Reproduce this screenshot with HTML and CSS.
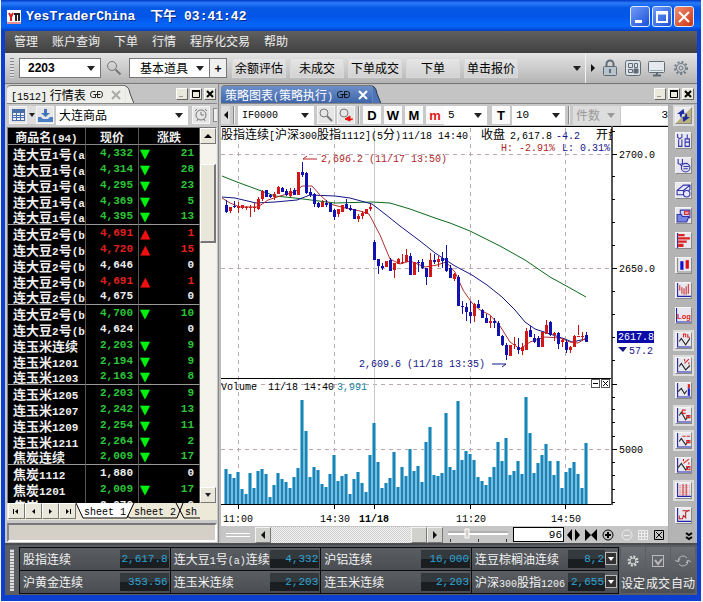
FILE: index.html
```html
<!DOCTYPE html>
<html lang="zh-CN">
<head>
<meta charset="utf-8">
<title>YesTraderChina</title>
<link rel="stylesheet" href="styles.css">
</head>
<body>
<div class="window">
  <header class="titlebar">
    <svg class="logo" width="14" height="14" viewBox="0 0 14 14"><rect width="14" height="14" fill="#fff"/><path d="M2 3l2 4v4M6 3L4 7" stroke="#c22" stroke-width="2" fill="none"/><path d="M7 4h6M9 4v7M12 4v7" stroke="#222" stroke-width="2" fill="none"/><path d="M0 13h14" stroke="#c22"/></svg>
    <h1>YesTraderChina</h1>
    <span class="clock"><b>下午</b> 03:41:42</span>
    <div class="winbtns">
      <button class="wb" aria-label="最小化"><svg width="18" height="18" viewBox="0 0 18 18"><path d="M4 12h7v3H4z" fill="#fff"/></svg></button>
      <button class="wb" aria-label="最大化"><svg width="18" height="18" viewBox="0 0 18 18"><path d="M4 4h10v10H4zM4 5.500h10" fill="none" stroke="#fff" stroke-width="2"/></svg></button>
      <button class="wb close" aria-label="关闭"><svg width="18" height="18" viewBox="0 0 18 18"><path d="M4 4l10 10M14 4L4 14" stroke="#fff" stroke-width="2"/></svg></button>
    </div>
  </header>

  <nav class="menubar">
    <a href="#">管理</a><a href="#">账户查询</a><a href="#">下单</a><a href="#">行情</a><a href="#">程序化交易</a><a href="#">帮助</a>
  </nav>

  <div class="toolbar">
    <span class="grip"></span>
    <label class="combo code"><select aria-label="代码"><option>2203</option></select></label>
    <button class="plain" aria-label="搜索"><svg width="17" height="17" viewBox="0 0 17 17" fill="none"><circle cx="6" cy="6" r="4.500" stroke="#777"/><path d="M9.500 9.500l5 5" stroke="#777" stroke-width="2"/></svg></button>
    <div class="joined">
      <label class="combo tools"><select aria-label="道具"><option>基本道具</option></select></label>
      <button class="plus" aria-label="添加">+</button>
    </div>
    <div class="actions">
      <button>余额评估</button><button>未成交</button><button>下单成交</button><button>下单</button><button>单击报价</button>
    </div>
    <span class="tri-down more"></span>
    <div class="sys">
      <span class="tri-right"></span>
      <button class="plain" aria-label="锁定"><svg width="16" height="18" viewBox="0 0 16 18" fill="none" stroke="#5f6b77"><path d="M4.500 8V5a3.500 3.500 0 0 1 7 0v3" stroke-width="2"/><rect x="1.500" y="7.500" width="13" height="9" rx="1" fill="#b9c3cb"/><path d="M8 10v4" stroke-width="2"/></svg></button>
      <button class="plain" aria-label="布局"><svg width="16" height="18" viewBox="0 0 16 18" fill="none" stroke="#5f6b77"><rect x=".5" y="1.500" width="15" height="15" rx="2" fill="#dce3e8"/><path d="M3.500 4.500h4v4h-4zM9.500 4.500h3v4h-3zM3.500 10.500h4v3h-4z"/><path d="M9 10h4v4H9z" fill="#5f6b77"/></svg></button>
      <button class="plain" aria-label="显示器"><svg width="18" height="18" viewBox="0 0 18 18" stroke="#5f6b77"><rect x=".5" y="2.500" width="16" height="11" rx="1" fill="#e4eaef"/><path d="M5 16.500h8M9 14v2" stroke-width="2"/><path d="M2 11.500h13" stroke="#9aa"/></svg></button>
      <button class="plain" aria-label="设置"><svg width="16" height="18" viewBox="0 0 16 18" fill="none" stroke="#6f7a85"><circle cx="8" cy="9" r="6" stroke-width="2" stroke-dasharray="2 2"/><circle cx="8" cy="9" r="4.500"/><circle cx="8" cy="9" r="2"/></svg></button>
    </div>
  </div>

  <main class="workspace">
    <section class="quotes">
      <div class="tabrow">
        <div class="tab light"><h2><span class="m">[1512]</span> 行情表</h2>
          <svg width="15" height="9" viewBox="0 0 15 9" fill="none" stroke="#222"><path d="M6.500 1.500H3.500q-2 0-2 3t2 3h3v-3h-2M8.500 7.500v-6h3q2 0 2 3t-2 3zM6.500 4.500h5"/></svg>
          <button class="x" aria-label="关闭标签"><svg width="10" height="10" viewBox="0 0 10 10"><path d="M1 1l8 8M9 1L1 9" stroke="#aaa" stroke-width="2"/></svg></button></div>
        <svg class="slope" width="9" height="19" viewBox="0 0 9 19"><path d="M0 1Q4 2 5 9L9 19H0z" fill="#eeeeea"/><path d="M0 1Q4 2 5 9L9 19" fill="none" stroke="#444"/></svg>
        <div class="minis"><button aria-label="最小化"><svg width="10" height="10" viewBox="0 0 10 10"><path d="M2 7.500h4" stroke="#999"/></svg></button><button aria-label="还原"><svg width="10" height="10" viewBox="0 0 10 10"><path d="M1.500 2v6.500h7V2M1 2h8" fill="none" stroke="#000"/><path d="M1 2h8" stroke="#000" stroke-width="2"/></svg></button><button aria-label="关闭"><svg width="10" height="10" viewBox="0 0 10 10"><path d="M2 2l6 6M8 2L2 8" stroke="#000" stroke-width="2"/></svg></button></div>
      </div>
      <div class="subbar">
        <button class="sq" aria-label="表格"><svg width="13" height="12" viewBox="0 0 13 12"><path d="M0 0h13v12H0z" fill="#4a6ea9"/><path d="M1 4h3v2H1zM5 4h3v2H5zM9 4h3v2H9zM1 7h3v1H1zM5 7h3v1H5zM9 7h3v1H9zM1 9h3v2H1zM5 9h3v2H5zM9 9h3v2H9z" fill="#eef"/></svg></button>
        <button class="thin" aria-label="更多"><span class="tri-down sm"></span></button>
        <button class="sq" aria-label="导入"><svg width="15" height="13" viewBox="0 0 15 13"><path d="M6 0h3v4h3L7.500 8L3 4h3z" fill="#3f74bd"/><path d="M0 8h3l2 2h5l2-2h3v5H0z" fill="#4b7fc4"/></svg></button>
        <label class="combo market"><select aria-label="市场"><option>大连商品</option></select></label>
        <button class="sq" aria-label="闹钟"><svg width="14" height="14" viewBox="0 0 14 14" fill="none" stroke="#777"><circle cx="7" cy="7" r="5"/><path d="M7 4v3h3M1 3l2-2M13 3l-2-2M3 13l1-2M11 13l-1-2"/></svg></button>
        <button class="cut" aria-label="列"></button>
      </div>
      <div class="gridwrap">
        <div class="gridview">
        <table>
          <thead><tr><th>商品名<i>(94)</i></th><th>现价</th><th colspan="2">涨跌</th></tr></thead>
          <tbody>
            <tr class="dn"><td>连大豆<i>1</i>号<i>(a</i></td><td>4,332</td><td>▼</td><td>21</td></tr>
            <tr class="dn"><td>连大豆<i>1</i>号<i>(a</i></td><td>4,314</td><td>▼</td><td>28</td></tr>
            <tr class="dn"><td>连大豆<i>1</i>号<i>(a</i></td><td>4,295</td><td>▼</td><td>23</td></tr>
            <tr class="dn"><td>连大豆<i>1</i>号<i>(a</i></td><td>4,369</td><td>▼</td><td>5</td></tr>
            <tr class="dn"><td>连大豆<i>1</i>号<i>(a</i></td><td>4,395</td><td>▼</td><td>13</td></tr>
            <tr class="up"><td>连大豆<i>2</i>号<i>(b</i></td><td>4,691</td><td>▲</td><td>1</td></tr>
            <tr class="up"><td>连大豆<i>2</i>号<i>(b</i></td><td>4,720</td><td>▲</td><td>15</td></tr>
            <tr><td>连大豆<i>2</i>号<i>(b</i></td><td>4,646</td><td></td><td>0</td></tr>
            <tr class="up"><td>连大豆<i>2</i>号<i>(b</i></td><td>4,691</td><td>▲</td><td>1</td></tr>
            <tr><td>连大豆<i>2</i>号<i>(b</i></td><td>4,675</td><td></td><td>0</td></tr>
            <tr class="dn"><td>连大豆<i>2</i>号<i>(b</i></td><td>4,700</td><td>▼</td><td>10</td></tr>
            <tr><td>连大豆<i>2</i>号<i>(b</i></td><td>4,624</td><td></td><td>0</td></tr>
            <tr class="dn"><td>连玉米连续</td><td>2,203</td><td>▼</td><td>9</td></tr>
            <tr class="dn"><td>连玉米<i>1201</i></td><td>2,194</td><td>▼</td><td>9</td></tr>
            <tr class="dn"><td>连玉米<i>1203</i></td><td>2,163</td><td>▼</td><td>8</td></tr>
            <tr class="dn"><td>连玉米<i>1205</i></td><td>2,203</td><td>▼</td><td>9</td></tr>
            <tr class="dn"><td>连玉米<i>1207</i></td><td>2,242</td><td>▼</td><td>13</td></tr>
            <tr class="dn"><td>连玉米<i>1209</i></td><td>2,254</td><td>▼</td><td>11</td></tr>
            <tr class="dn"><td>连玉米<i>1211</i></td><td>2,264</td><td>▼</td><td>2</td></tr>
            <tr class="dn"><td>焦炭连续</td><td>2,009</td><td>▼</td><td>17</td></tr>
            <tr><td>焦炭<i>1112</i></td><td>1,880</td><td></td><td>0</td></tr>
            <tr class="dn"><td>焦炭<i>1201</i></td><td>2,009</td><td>▼</td><td>17</td></tr>
            <tr><td>焦炭<i>1202</i></td><td>2,070</td><td></td><td>0</td></tr>
          </tbody>
        </table>
        </div>
        <div class="vscroll"><button aria-label="向上"><span class="tri-up"></span></button><span class="space"></span><span class="thumb"></span><span class="rest"></span><button aria-label="向下"><span class="tri-down sm"></span></button></div>
      </div>
      <div class="sheets">
        <button aria-label="首页"><svg width="7" height="7" viewBox="0 0 7 7"><path d="M0 1h1v5H0zM5 1v5L2 3.500z"/></svg></button><button aria-label="上页"><svg width="7" height="7" viewBox="0 0 7 7"><path d="M5 1v5L2 3.500z"/></svg></button><button aria-label="下页"><svg width="7" height="7" viewBox="0 0 7 7"><path d="M2 1v5l3-2.500z"/></svg></button><button aria-label="末页"><svg width="7" height="7" viewBox="0 0 7 7"><path d="M6 1h1v5H6zM2 1v5l3-2.500z"/></svg></button>
        <svg class="sheettabs" width="124" height="17" viewBox="0 0 124 17"><path d="M0 0L7 15H50L57 0z" fill="#fff"/><path d="M0 0L7 15H51L58 0M51 13L54 15H101L107 0M100 0L108 15H124" fill="none" stroke="#000"/><text x="8" y="12">sheet 1</text><text x="58" y="12">sheet 2</text><text x="109" y="12">sh</text></svg>
      </div>
      <div class="footbox"></div>
    </section>

    <section class="chart">
      <div class="tabrow">
        <div class="tab blue"><h2>策略图表<span class="m">(</span>策略执行<span class="m">)</span></h2>
          <svg width="15" height="9" viewBox="0 0 15 9" fill="none" stroke="#111"><path d="M6.500 1.500H3.500q-2 0-2 3t2 3h3v-3h-2M8.500 7.500v-6h3q2 0 2 3t-2 3zM6.500 4.500h5"/></svg>
          <button class="x" aria-label="关闭标签"><svg width="10" height="10" viewBox="0 0 10 10"><path d="M1 1l8 8M9 1L1 9" stroke="#fff" stroke-width="2"/></svg></button></div>
        <svg class="slope" width="9" height="19" viewBox="0 0 9 19"><path d="M0 1Q4 2 5 9L9 19H0z" fill="#4b73b5"/><path d="M0 1Q4 2 5 9L9 19" fill="none" stroke="#234"/></svg>
        <div class="minis"><button aria-label="最小化"><svg width="10" height="10" viewBox="0 0 10 10"><path d="M2 7.500h4" stroke="#999"/></svg></button><button aria-label="还原"><svg width="10" height="10" viewBox="0 0 10 10"><path d="M1.500 2v6.500h7V2" fill="none" stroke="#000"/><path d="M1 2h8" stroke="#000" stroke-width="2"/></svg></button><button aria-label="关闭"><svg width="10" height="10" viewBox="0 0 10 10"><path d="M2 2l6 6M8 2L2 8" stroke="#000" stroke-width="2"/></svg></button></div>
      </div>
      <div class="chartbody">
        <div class="chartmain">
          <div class="subbar">
            <button class="thin" aria-label="左移"><span class="tri-left"></span></button>
            <span class="sep"></span>
            <label class="combo sym"><select aria-label="合约"><option>IF0000</option></select></label>
            <button class="sq" aria-label="搜索"><svg width="14" height="14" viewBox="0 0 14 14" fill="none" stroke="#777"><circle cx="5" cy="5" r="4"/><path d="M8 8l5 5" stroke-width="2"/></svg></button>
            <button class="sq" aria-label="搜索并跳转"><svg width="15" height="14" viewBox="0 0 15 14" fill="none" stroke="#777"><circle cx="5" cy="5" r="4"/><path d="M14 11h-3V8l-5 3 5 2" fill="#e11" stroke="#e11"/></svg></button>
            <span class="sep"></span>
            <div class="periods"><button>D</button><button>W</button><button>M</button><button class="on">m</button></div>
            <label class="combo num"><select aria-label="分钟"><option>5</option></select></label>
            <button class="tick">T</button>
            <label class="combo num wide"><select aria-label="笔数"><option>10</option></select></label>
            <span class="sep"></span>
            <label class="combo off"><select aria-label="件数" disabled><option>件数</option></select></label>
            <input class="count" aria-label="数量" value="3">
          </div>
          <svg class="plot" viewBox="221 126 447 400" preserveAspectRatio="xMinYMin meet">
            <rect x="221" y="126" width="447" height="400" fill="#fff"/>
            <g shape-rendering="crispEdges" fill="none">
              <path d="M238.500 144V504M334.500 144V504M470.500 128V504M565.500 128V504M221 154.500H612M221 268.500H612M221 384.500H590M221 449.500H612" stroke="#b9a9b4" stroke-dasharray="4 4"/>
              <path d="M374.500 128V504" stroke="#c8c8c8"/>
              <path d="M226 504V469m4 35V474m4 30V478m4 26V472m4 32V489m4 15V494m4 10V473m4 31V488m4 16V471m4 33V469m4 35V474m4 30V497m4 7V485m4 19V473m4 31V479m4 25V482m4 22V488m4 16V477m4 27V468m4 36V400m4 104V431m4 73V477m4 27V467m4 37V470m4 34V484m4 20V487m4 17V474m4 30V455m4 49V481m4 23V476m4 28V474m4 30V494m4 10V479m4 25V472m4 32V483m4 21V492m4 12V455m4 49V423m4 81V462m4 42V488m4 16V483m4 21V478m4 26V452m4 52V487m4 17V467m4 37V476m4 28V449m4 55V471m4 33V466m4 38V482m4 22V442m4 62V427m4 77V475m4 29V476m4 28V473m4 31V413m4 91V467m4 37V470m4 34V401m4 103V460m4 44V451m4 53V454m4 50V460m4 44V477m4 27V481m4 23V485m4 19V477m4 27V467m4 37V442m4 62V461m4 43V438m4 66V475m4 29V471m4 33V461m4 43V474m4 30V397m4 107V433m4 71V473m4 31V463m4 41V455m4 49V444m4 60V461m4 43V475m4 29V461m4 43V488m4 16V472m4 32V468m4 36V462m4 42V474m4 30V488m4 16V443" stroke="#6fc0e2" stroke-width="4"/>
              <path d="M226 504V469m4 35V474m4 30V478m4 26V472m4 32V489m4 15V494m4 10V473m4 31V488m4 16V471m4 33V469m4 35V474m4 30V497m4 7V485m4 19V473m4 31V479m4 25V482m4 22V488m4 16V477m4 27V468m4 36V400m4 104V431m4 73V477m4 27V467m4 37V470m4 34V484m4 20V487m4 17V474m4 30V455m4 49V481m4 23V476m4 28V474m4 30V494m4 10V479m4 25V472m4 32V483m4 21V492m4 12V455m4 49V423m4 81V462m4 42V488m4 16V483m4 21V478m4 26V452m4 52V487m4 17V467m4 37V476m4 28V449m4 55V471m4 33V466m4 38V482m4 22V442m4 62V427m4 77V475m4 29V476m4 28V473m4 31V413m4 91V467m4 37V470m4 34V401m4 103V460m4 44V451m4 53V454m4 50V460m4 44V477m4 27V481m4 23V485m4 19V477m4 27V467m4 37V442m4 62V461m4 43V438m4 66V475m4 29V471m4 33V461m4 43V474m4 30V397m4 107V433m4 71V473m4 31V463m4 41V455m4 49V444m4 60V461m4 43V475m4 29V461m4 43V488m4 16V472m4 32V468m4 36V462m4 42V474m4 30V488m4 16V443" stroke="#2480b0" stroke-width="2.800"/>
              <path d="M221 126.500H668M221 378.500H612M221 504.500H612M238.500 505v4M334.500 505v4M374.500 505v4M470.500 505v4M565.500 505v4" stroke="#000"/>
              <path d="M612 126V505" stroke="#555" stroke-width="2"/>
              <path d="M612 131.500h3M612 154.500h5M612 176.500h3M612 199.500h3M612 222.500h3M612 245.500h3M612 268.500h5M612 291.500h3M612 314.500h3M612 337.500h3M612 360.500h3M612 384.500h5M612 397.500h3M612 409.500h3M612 422.500h3M612 436.500h3M612 449.500h5M612 462.500h3M612 475.500h3M612 489.500h3M612 502.500h3" stroke="#000"/>
            </g>
            <g fill="none">
              <path d="M222 176L237 182L256 189L275 196L295 198L335 203L372 202L390 203L410 209L435 218L450 223L470 231L500 246L525 260L550 277L570 288L586 297" stroke="#0a6a1a"/>
              <path d="M222 197L235 198L256 203L275 202L297 200L310 195L335 196L350 198L372 204L385 214L400 226L420 241L435 253L455 266L472 275L487 285L502 297L515 310L525 322L535 329L550 334L565 339L572 342L586 339" stroke="#15158a"/>
              <path d="M222 198L230 203L240 207L258 207L268 200L280 196L295 192L302 186L312 186L320 195L330 204L345 208L360 211L369 214L380 235L390 259L400 264L410 261L425 267L437 265L446 262L455 272L463 290L472 303L480 310L490 315L500 326L510 342L520 349L530 342L545 337L560 338L570 342L578 343L586 338" stroke="#b03030"/>
            </g>
            <g fill="none" shape-rendering="crispEdges">
              <path d="M230.500 207v6M238.500 202v11M242.500 205v4M246.500 206v4M250.500 205v12M254.500 203v9M258.500 197v13M262.500 190v11M274.500 192v8M278.500 186v8M290.500 188v9M298.500 172v23M322.500 200v7M338.500 209v8M342.500 205v7M358.500 214v8M362.500 211v8M366.500 209v5M370.500 204v7M386.500 261v6M394.500 263v15M398.500 258v6M402.500 254v10M406.500 249v13M414.500 262v13M430.500 253v24M438.500 256v11M454.500 273v8M474.500 303v19M490.500 316v12M510.500 345v11M514.500 337v12M522.500 343v12M526.500 328v22M542.500 332v15M546.500 320v14M554.500 332v9M562.500 339v8M570.500 346v7M574.500 335v12M578.500 325v10M582.500 332v9" stroke="#c11"/>
              <path d="M230.500 207v4M238.500 206v2M242.500 205v3M246.500 207v1M250.500 207v1M254.500 207v1M258.500 199v10M262.500 191v8M274.500 194v3M278.500 187v7M290.500 191v5M298.500 172v23M322.500 202v5M338.500 209v5M342.500 205v7M358.500 216v3M362.500 213v3M366.500 209v5M370.500 207v2M386.500 261v6M394.500 263v7M398.500 259v5M402.500 262v1M406.500 255v7M414.500 262v13M430.500 260v17M438.500 259v3M454.500 274v5M474.500 304v12M490.500 321v2M510.500 345v11M514.500 344v1M522.500 347v4M526.500 331v19M542.500 332v15M546.500 325v9M554.500 333v2M562.500 340v2M570.500 347v3M574.500 336v11M578.500 336v1M582.500 336v1" stroke="#d01818" stroke-width="3"/>
              <path d="M226.500 200v13M234.500 201v7M266.500 190v7M270.500 194v4M282.500 187v5M286.500 189v7M294.500 188v7M302.500 162v15M306.500 172v22M310.500 188v9M314.500 193v14M318.500 202v6M326.500 200v7M330.500 203v9M334.500 209v11M346.500 199v10M350.500 205v6M354.500 209v10M374.500 240v20M378.500 259v15M382.500 263v7M390.500 258v13M410.500 253v22M418.500 260v12M422.500 259v10M426.500 268v17M434.500 254v10M442.500 252v16M446.500 245v27M450.500 265v13M458.500 275v31M462.500 301v13M466.500 303v18M470.500 301v22M478.500 300v8M482.500 309v9M486.500 314v9M494.500 318v10M498.500 321v15M502.500 335v11M506.500 343v17M518.500 338v16M530.500 326v11M534.500 334v9M538.500 336v11M550.500 321v15M558.500 332v17M566.500 340v13M586.500 332v10" stroke="#1515a5"/>
              <path d="M226.500 205v7M234.500 206v1M266.500 190v7M270.500 195v2M282.500 188v4M286.500 191v4M294.500 190v5M302.500 172v3M306.500 173v20M310.500 192v3M314.500 194v10M318.500 203v4M326.500 203v2M330.500 203v9M334.500 210v7M346.500 204v4M350.500 208v2M354.500 209v10M374.500 242v18M378.500 259v7M382.500 266v2M390.500 260v11M410.500 256v19M418.500 262v1M422.500 262v6M426.500 268v9M434.500 260v2M442.500 258v3M446.500 258v13M450.500 268v10M458.500 277v29M462.500 306v1M466.500 307v5M470.500 312v4M478.500 304v4M482.500 310v8M486.500 318v5M494.500 321v2M498.500 323v13M502.500 336v9M506.500 345v10M518.500 347v3M530.500 330v7M534.500 338v4M538.500 338v9M550.500 322v13M558.500 333v11M566.500 342v8M586.500 335v7" stroke="#1212b0" stroke-width="3"/>
            </g>
            <path d="M317 159H303l4-3" fill="none" stroke="#c02020"/>
            <path d="M492 364h14l-4 3" fill="none" stroke="#15158a"/>
            <g class="ct">
              <text x="221" y="139"><tspan class="cj">股指连续</tspan>[<tspan class="cj">沪深</tspan>300<tspan class="cj">股指</tspan>1112](5<tspan class="cj">分</tspan>)</text>
              <text x="402" y="139">11/18 14:40</text>
              <text x="481" y="139"><tspan class="cj">收盘</tspan></text><text x="510" y="139">2,617.8</text><text x="556" y="139" class="navy">-4.2</text>
              <svg x="596" y="126" width="16" height="18"><text class="cj" x="0" y="13">开盘</text></svg>
              <text x="501" y="151" class="red">H: -2.91%</text><text x="562" y="151" class="navy">L: 0.31%</text>
              <text x="321" y="162" class="red">2,696.2 (11/17 13:50)</text>
              <text x="359" y="367" class="navy">2,609.6 (11/18 13:35)</text>
              <text x="221" y="390">Volume</text><text x="268" y="390">11/18 14:40</text><text x="337" y="390" class="teal">3,991</text>
              <text x="619" y="158">2700.0</text><text x="619" y="272">2650.0</text><text x="619" y="453">5000</text>
              <rect x="617" y="331" width="37" height="12" fill="#0a0aa8"/><text x="618" y="340" class="white">2617.8</text>
              <path d="M618 347h9l-4 5z" fill="#15158a"/><text x="629" y="354" class="navy">57.2</text>
              <text x="223" y="522">11:00</text><text x="320" y="522">14:30</text><text x="359" y="522" font-weight="bold">11/18</text><text x="456" y="522">11:20</text><text x="551" y="522">14:50</text>
            </g>
            <g fill="#fff" stroke="#555"><rect x="591.500" y="379.500" width="8" height="8"/><rect x="601.500" y="379.500" width="8" height="8"/><path d="M593 383.500h5M603 381l5 5M608 381l-5 5" stroke="#000"/></g>
          </svg>
          <div class="hbar">
            <span class="rail"></span>
            <button class="hb" aria-label="左滚"><span class="tri-left"></span></button>
            <span class="track"></span>
            <button class="hb" aria-label="滑块"></button>
            <button class="hb" aria-label="右滚"><span class="tri-right"></span></button>
            <svg class="slider" width="62" height="16" viewBox="0 0 62 16"><path d="M1 7h60" stroke="#fff" stroke-width="2"/><path d="M1 5h60" stroke="#999"/><path d="M3.500 12v3M31.500 12v3M59.500 12v3" stroke="#333"/><path d="M18 2h4v9h-4z" fill="#d4d0c8" stroke="#fff"/></svg>
            <input class="bars" aria-label="柱数" value="96">
            <svg class="zooms" width="98" height="14" viewBox="0 0 98 14"><path d="M5 1v12L0 7zM8 1v12l5-6zM18 1v12l6-6zM30 1v12l-6-6z"/><g fill="none" stroke="#000"><circle cx="41" cy="7" r="5"/><path d="M41 4v6M38 7h6" stroke-width="2"/><path d="M87.500 2.500h9v9h-9zM89 4l6 6M95 4l-6 6"/></g><g fill="none" stroke="#ededed"><circle cx="60" cy="7" r="5"/><path d="M57 7.500h6"/><path d="M71.500 2.500h9v9h-9zM71 5.500h10M71 8.500h10M74.500 2v10M77.500 2v10"/></g></svg>
          </div>
        </div>
        <aside class="side">
          <button class="lit" aria-label="刷新"><svg viewBox="0 0 14 14"><path d="M14 0v14H0z" fill="#b9b27c"/><path d="M7 1L1 5.500h2.500Q3 8 5 9.500Q5 7 6 5.500H8zM7 13l6-4.500h-2.500Q11 6 9 4.500Q9 7 8 8.500H6z" fill="#1a2aa0"/></svg></button>
          <button aria-label="工具"><svg viewBox="0 0 14 14" fill="none" stroke="#33a"><path d="M1.500 1v3l2 1.500 2-1.500V1M2.500 6v6.500h3V6M8.500 5.500h4v7h-4zM9 8.500h4M10.500 1.500v4"/></svg></button>
          <button aria-label="工具设置"><svg viewBox="0 0 14 14" fill="none" stroke="#33a"><path d="M2 1v4l2 1 2-1V1M4 6l4 5"/><circle cx="9" cy="9" r="4" fill="#dde"/><path d="M7 8h5M7 10h4"/></svg></button>
          <button aria-label="橡皮"><svg viewBox="0 0 14 14" fill="#e8e8ff" stroke="#33a"><path d="M1 7l6-5h6v4l-5 5H1zM1 7h6v4M7 7l6-5"/><circle cx="10" cy="10" r="3"/></svg></button>
          <button aria-label="打开"><svg viewBox="0 0 14 14" fill="#cdd3ff" stroke="#33a"><path d="M4 2h9v7H4z"/><path d="M8 3h4v3H8z" fill="#f99" stroke="#c33"/><path d="M1 6h4l1 2h6l-2 5H1z" fill="#7784e0"/></svg></button>
          <button aria-label="横条"><svg viewBox="0 0 14 14"><path d="M1.500 0v14" stroke="#22a"/><path d="M2 1h6v2H2zM2 4h11v2H2zM2 7h8v2H2zM2 10h5v3H2z" fill="#d22"/></svg></button>
          <button aria-label="K线"><svg viewBox="0 0 14 14"><path d="M1.500 0v13H14" stroke="#888" fill="none"/><path d="M4 3h3v8H4z" fill="#11c"/><path d="M9 2h3v8H9z" fill="#d11"/></svg></button>
          <button aria-label="线图"><svg viewBox="0 0 14 14" fill="none"><path d="M1.500 0v12.500H14" stroke="#22a"/><path d="M3.500 2v5M5.500 4v6M7.500 5v6M9.500 3v8M11.500 1v9" stroke="#c33"/></svg></button>
          <button aria-label="对数"><svg viewBox="0 0 14 14"><path d="M.5 0v13H14" stroke="#22a" fill="none"/><text x="1" y="10" class="log">Log</text></svg></button>
          <button class="lit" aria-label="RL"><svg viewBox="0 0 14 14" fill="none"><path d="M1.500 0v13H14" stroke="#22a"/><path d="M3 8l2-3 4 6 4-6" stroke="#222"/><path d="M7 4V1h2v3M11 1v3h2" stroke="#d22"/></svg></button>
          <button class="lit" aria-label="百分比"><svg viewBox="0 0 14 14" fill="none"><path d="M1.500 0v13H14" stroke="#22a"/><path d="M3 8l2-3 4 6 4-4" stroke="#222"/><path d="M8 5l4-4M8 1v2M12 4v2" stroke="#d22"/></svg></button>
          <button aria-label="标记"><svg viewBox="0 0 14 14" fill="none"><path d="M1.500 0v13H14" stroke="#22a"/><path d="M2 8l3-3 3 5 2-3" stroke="#222"/><path d="M12 1v4" stroke="#d22" stroke-width="2"/><path d="M12 5v7" stroke="#22c" stroke-width="2"/></svg></button>
          <button class="lit" aria-label="C线"><svg viewBox="0 0 14 14" fill="none"><path d="M1.500 0v13H14" stroke="#22a"/><path d="M3 7l2-3 4 7 3-4" stroke="#222"/><path d="M9 2H6v3h3M10 7h3v2h-3z" stroke="#d22"/></svg></button>
          <button class="lit" aria-label="差值"><svg viewBox="0 0 14 14" fill="none"><path d="M1.500 0v13H14" stroke="#22a"/><path d="M3 8l2-3 4 6 3-4" stroke="#222"/><path d="M6 3h3M10 3h3M10 7h3v2h-3z" stroke="#d22"/></svg></button>
          <button aria-label="比率"><svg viewBox="0 0 14 14" fill="none"><path d="M1.500 0v13H14" stroke="#22a"/><path d="M2 9l3-4 4 6 3-3" stroke="#222"/><path d="M7 5l5-4M7 1v2M12 4v2M10 8h3v3h-3z" stroke="#d22"/></svg></button>
          <button class="lit" aria-label="网格"><svg viewBox="0 0 14 14" fill="none"><path d="M1.500 0v12.500H14" stroke="#22a"/><path d="M3 2.500h10M3 4.500h10M3 6.500h10M3 8.500h10M3 10.500h10" stroke="#e88" stroke-dasharray="2 1"/><path d="M6.500 1v11M9.500 1v11" stroke="#c44"/></svg></button>
          <button aria-label="趋势"><svg viewBox="0 0 14 14" fill="none"><path d="M1.500 0v12.500H14" stroke="#22a"/><path d="M3 7v3h3l1-3 2 2V4l3-2M6 2.500h7" stroke="#b22"/></svg></button>
          <svg class="chev" width="8" height="9" viewBox="0 0 8 9"><path d="M1 1l3 2 3-2M1 5l3 2 3-2" fill="none" stroke="#000" stroke-width="2"/></svg>
        </aside>
      </div>
    </section>
  </main>

  <footer class="status">
    <span class="grip"></span>
    <dl class="ticker">
      <div><dt>股指连续</dt><dd>2,617.8</dd></div>
      <div><dt>连大豆<i>1</i>号<i>(a)</i>连续</dt><dd>4,332</dd></div>
      <div><dt>沪铝连续</dt><dd>16,000</dd></div>
      <div class="pick"><dt>连豆棕榈油连续</dt><dd>8,2</dd><button aria-label="选择"><span class="tri-down sm"></span></button></div>
      <div><dt>沪黄金连续</dt><dd>353.56</dd></div>
      <div><dt>连玉米连续</dt><dd>2,203</dd></div>
      <div><dt>连玉米连续</dt><dd>2,203</dd></div>
      <div class="pick"><dt>沪深<i>300</i>股指<i>1206</i></dt><dd>2,655</dd><button aria-label="选择"><span class="tri-down sm"></span></button></div>
    </dl>
    <button class="big"><svg width="14" height="14" viewBox="0 0 14 14" fill="none" stroke="#ddd"><circle cx="7" cy="7" r="4.500" stroke-width="2" stroke-dasharray="2 1.500"/><circle cx="7" cy="7" r="3"/></svg>设定</button>
    <button class="big"><svg width="14" height="14" viewBox="0 0 14 14" fill="none" stroke="#bbb"><rect x="1.500" y="1.500" width="11" height="11"/><path d="M4 6l3 4 4-5" stroke-width="2"/></svg>成交</button>
    <button class="big"><svg width="16" height="14" viewBox="0 0 16 14" fill="none" stroke="#bbb"><path d="M3 7a5 5 0 0 1 9-3M13 7a5 5 0 0 1-9 3M0 6l3 2 2-3M16 8l-3-2-2 3"/></svg>自动</button>
  </footer>
</div>
</body>
</html>
```
FILE: styles.css
```css
* { box-sizing: border-box; }
body {
  margin: 0;
  padding: 0 2px 1px 1px;
  background: #f4f4f4;
  color: #000;
  font: 12px/16px "Noto Sans CJK SC", sans-serif;
}
button, input, select {
  margin: 0;
  padding: 0;
  border: 0;
  border-radius: 0;
  color: inherit;
  font: inherit;
}
button { display: flex; align-items: center; justify-content: center; background: none; }
h1, h2, dl, dd { margin: 0; font: inherit; }
i { font-style: normal; line-height: 0; }
svg { display: block; flex: none; }
.m, .ticker i { font-family: "Liberation Mono", monospace; font-size: 10px; line-height: 0; }

.tri-down, .tri-up, .tri-left, .tri-right, .combo::after { width: 0; height: 0; border: 4px solid transparent; }
.tri-down, .combo::after { content: ""; border-top: 5px solid #222; border-bottom: 0; }
.tri-down.sm { border-width: 4px 3px 0; }
.tri-up { border-bottom: 4px solid #000; border-top: 0; }
.tri-left { border-right: 4px solid #111; border-left: 0; }
.tri-right { border-left: 4px solid #111; border-right: 0; }

.window {
  display: flex;
  flex-direction: column;
  height: calc(100vh - 1px);
  border: solid #0c3fd0;
  border-width: 0 4px 6px;
  background: #c6c6c6;
}

/* title bar */
.titlebar {
  display: flex;
  align-items: center;
  flex: none;
  height: 31px;
  margin: 0 -4px;
  padding: 2px 7px 0 6px;
  color: #fff;
  background: linear-gradient(#0038c8 0, #2b7cf8 3px, #0458e4 8px, #0355e6 16px, #0566fb 26px, #0040c8 31px);
  font: bold 13px "Liberation Mono", monospace;
}
.titlebar h1 { margin-left: 5px; text-shadow: 1px 1px #0a2a80; }
.clock { margin-left: 15px; font-size: 13px; white-space: pre; text-shadow: 1px 1px #0a2a80; }
.clock b { font: bold 13px "Noto Sans CJK SC", sans-serif; line-height: 0; }
.winbtns { display: flex; gap: 2px; margin-left: auto; }
.wb { width: 20px; height: 21px; border: 1px solid #dfe9ff; border-radius: 3px; background: linear-gradient(135deg, #6f9cf8, #1c50d8); }
.wb.close { background: linear-gradient(135deg, #f09070, #cc3310); }

.menubar {
  display: flex;
  align-items: center;
  flex: none;
  gap: 14px;
  height: 22px;
  padding: 0 0 2px 9px;
  background: linear-gradient(#606060, #404040);
}
.menubar a { color: #f0f0f0; text-decoration: none; }

/* main toolbar */
.toolbar {
  display: flex;
  align-items: center;
  flex: none;
  height: 31px;
  padding-left: 5px;
  border-bottom: 1px solid #777;
  background: linear-gradient(#e4e4e4, #b4b4b4);
}
.grip { width: 4px; height: 20px; background: repeating-linear-gradient(#888 0 1px, #ddd 1px 3px); }
.combo { display: grid; align-items: center; height: 20px; background: #fff; }
.combo > select, .combo::after { grid-area: 1 / 1; }
.combo > select { width: 100%; height: 100%; appearance: none; background: none; opacity: 1; }
.combo::after { justify-self: end; margin-right: 5px; pointer-events: none; }
.toolbar .combo { border: 1px solid #777; }
.code { width: 82px; margin: 0 5px; }
.code select { padding-left: 8px; font: bold 12px "Liberation Sans", sans-serif; }
.joined { display: flex; margin: 0 5px 0 6px; }
.tools { width: 81px; }
.tools select { padding-left: 10px; }
.toolbar .tools::after { margin-right: 5px; }
.plus { width: 17px; border: 1px solid #777; border-left: 0; background: #f0f0f0; font-weight: bold; }
.actions { display: flex; gap: 4px; }
.actions button { width: 54px; height: 20px; border: 1px solid #d9d9d9; background: linear-gradient(#e6e6e6, #d2d2d2); white-space: nowrap; }
.more { margin-left: auto; }
.sys { display: flex; align-items: center; gap: 7px; height: 30px; margin-left: 4px; padding: 0 8px 0 5px; border-left: 1px solid #f2f2f2; }

/* panels */
.workspace { display: flex; flex: 1; min-height: 0; }
.quotes { display: flex; flex: none; flex-direction: column; width: 214px; padding: 1px 1px 0 2px; border-right: 1px solid #888; background: #c8c8c8; }
.chart { display: flex; flex: 1; flex-direction: column; min-width: 0; padding: 1px 0 0 2px; background: #bdbdbd; }
.tabrow { display: flex; align-items: flex-end; flex: none; height: 19px; border-bottom: 1px solid #888; background: #c4c4c4; }
.tab { display: flex; align-items: center; gap: 3px; height: 18px; padding-left: 4px; border-top: 1px solid #777; border-radius: 4px 0 0; white-space: nowrap; }
.tab.light { background: #eeeeea; }
.tab.blue { color: #fff; background: linear-gradient(#6c8fc8, #3f66aa); }
.tab .x { width: 18px; }
.slope { height: 18px; }
.minis { display: flex; gap: 2px; margin: 0 3px 3px auto; }
.quotes .minis { margin-right: 1px; }
.minis button { width: 12px; height: 12px; border: 1px solid #fff; border-right-color: #666; border-bottom-color: #666; background: #ebe8dc; }
.subbar { display: flex; align-items: center; flex: none; height: 22px; background: #c9c9c9; overflow: hidden; }
.subbar .combo { height: 19px; }
.sq { flex: none; width: 18px; height: 18px; background: #e6e6e6; border: 1px solid #f5f5f5; }
.thin { flex: none; width: 9px; height: 18px; background: #ddd; }
.quotes .subbar { padding: 0 0 0 2px; }
.market { flex: 1; margin: 0 4px 0 2px; }
.market select { padding-left: 3px; }
.cut { width: 4px; height: 14px; margin-left: 3px; border: 1px solid #888; border-right: 0; background: #eee; }

/* price table */
.gridwrap { display: flex; flex: 1; min-height: 0; margin-top: 1px; border: 1px solid #777; border-bottom: 0; border-right-color: #eee; }
.gridview { flex: 1; overflow: hidden; background: #000; }
.gridview table { width: 100%; border-collapse: separate; border-spacing: 0; table-layout: fixed; color: #eee; background: #000; font: bold 13px/15px "Noto Sans CJK SC", sans-serif; }
th, td { height: 16px; padding: 0; border-right: 1px solid #555; white-space: nowrap; font-weight: bold; line-height: 15px; }
th { height: 17px; border-bottom: 1px solid #888; font-size: 12px; }
th:nth-child(1) { width: 78px; }
th:nth-child(2) { width: 53px; }
td:nth-child(1) { padding-left: 5px; }
td:nth-child(3) { width: 20px; border-right: 0; padding-left: 1px; font: 13px/15px "DejaVu Sans", sans-serif; }
td:nth-child(2), td:nth-child(4), td i, th i { font-family: "Liberation Mono", monospace; font-size: 11px; }
td:nth-child(2), td:nth-child(4) { padding-right: 5px; text-align: right; }
tbody tr:nth-child(5n) td { border-bottom: 1px solid #999; }
.dn td:nth-child(n+2) { color: #2cc438; }
.up td:nth-child(n+2) { color: #e02020; }
.dn td:nth-child(3) { color: #00f010; }
.up td:nth-child(3) { color: #f01010; }
.vscroll { display: flex; flex: none; flex-direction: column; width: 16px; background: #f4f3ec; }
.vscroll button { height: 16px; border: 1px solid #fff; border-right-color: #777; border-bottom-color: #777; background: #e9e6da; }
.space { height: 20px; }
.thumb { height: 79px; border: 1px solid #fff; border-right: 2px solid #777; border-bottom: 2px solid #777; background: #e9e6da; }
.rest { flex: 1; }
.sheets { display: flex; flex: none; height: 17px; overflow: hidden; background: #ece9d8; }
.sheets button { flex: none; width: 17px; height: 16px; border: 1px solid #fff; border-right-color: #777; border-bottom-color: #777; background: #e9e6da; }
.sheets button:first-child { margin-left: 1px; }
.sheettabs text { font: 10px "Liberation Mono", monospace; }
.footbox { flex: none; height: 19px; margin: 3px 0 1px; border: 2px solid #fff; border-top-color: #777; border-left-color: #888; background: #d4d0c8; }

/* chart */
.chartbody { display: flex; flex: 1; min-height: 0; }
.chartmain { display: flex; flex: 1; flex-direction: column; min-width: 0; }
.sep { flex: none; width: 2px; height: 18px; margin: 0 3px; border-left: 1px solid #888; border-right: 1px solid #eee; }
.chart .subbar .combo { flex: none; }
.sym { width: 76px; margin-right: 3px; }
.sym select, .num select, .count { padding-left: 4px; font: 11px "Liberation Mono", monospace; }
.sym select { font-size: 10px; }
.chart .sq + .sq { margin-left: 2px; }
.periods { display: flex; gap: 3px; }
.periods button, .tick { width: 18px; height: 18px; background: #fafafa; font: bold 13px "Liberation Sans", sans-serif; }
.periods .on { color: #e01818; }
.num { width: 43px; }
.num.wide { width: 53px; }
.tick { flex: none; margin: 0 2px 0 5px; }
.off { width: 47px; margin-right: 1px; color: #999; }
.chart .subbar .off { background: #ddd; }
.off select { padding-left: 3px; }
.off::after { border-top-color: #999; }
.count { flex: 1; min-width: 0; height: 19px; background: #fff; text-align: right; }
.plot { flex: 1; width: 100%; min-height: 0; background: #fff; }
.ct text { font: 10px "Liberation Mono", monospace; }
.ct .cj { font: 12px "Noto Sans CJK SC", sans-serif; }
.ct text[font-weight] { font-weight: bold; }
.ct .navy { fill: #15158a; }
.ct .red { fill: #b02828; }
.ct .teal { fill: #1a7f9f; }
.ct .white { fill: #fff; }
.hbar { display: flex; align-items: center; flex: none; height: 17px; background: #c6c6c6; }
.rail { width: 24px; height: 4px; margin: 0 5px; border-top: 1px solid #fff; border-bottom: 1px solid #fff; }
.hb { flex: none; width: 16px; height: 16px; border: 1px solid #f4f4f4; border-right-color: #777; border-bottom-color: #777; background: #d0d0cc; }
.track { flex: 1; height: 16px; background: repeating-conic-gradient(#f2f2f2 0 25%, #cfcfcf 0 50%) 0 0 / 2px 2px; }
.slider { margin: 0 4px; }
.bars { flex: none; width: 51px; height: 15px; padding-right: 1px; border: 1px solid #000; background: #fff; text-align: right; font: 11px "Liberation Mono", monospace; }
.zooms { margin: 0 3px; }

.side { display: flex; flex: none; flex-direction: column; align-items: center; gap: 8px; width: 29px; padding-top: 3px; border-left: 1px solid #aaa; background: #b4b4b4; }
.side button { flex: none; width: 17px; height: 17px; border: 1px solid #f4f4f4; border-right-color: #888; border-bottom-color: #888; background: #e8e8ee; }
.side button svg { width: 15px; height: 15px; }
.side .lit { box-shadow: 0 0 0 2px #dcdcdc; }
.log { fill: #d22; font: bold 7px "Liberation Sans", sans-serif; }
.chev { align-self: flex-end; margin-right: 4px; }

/* quote strip */
.status { display: flex; align-items: center; flex: none; height: 52px; padding: 0 2px 0 5px; border-top: 2px solid #4a4c4e; color: #f2f2f2; background: #5b5f63; }
.status .grip { height: 42px; }
.ticker { display: grid; flex: 1; grid-template-columns: repeat(3, minmax(0, 1fr)) 146px; gap: 1px; margin: 0 1px 0 5px; padding: 1px; background: #0c0c0c; }
.ticker div { display: flex; align-items: center; height: 22px; padding: 0 1px 0 3px; background: linear-gradient(#5a5e62, #4a4e52); white-space: nowrap; }
.ticker dt { flex: 1; min-width: 0; }
.ticker dd { width: 49px; height: 18px; padding-right: 1px; color: #2fa4d6; background: linear-gradient(#33393d 50%, #1a1e21 50%); font: 11px/18px "Liberation Mono", monospace; text-align: right; }
.ticker .pick dd { width: 37px; }
.ticker button { width: 12px; height: 13px; border: 1px solid #bbb; background: #333; }
.ticker .tri-down { border-top-color: #fff; }
.big { flex: none; flex-direction: column; gap: 7px; width: 24px; height: 46px; margin-left: 1px; padding-top: 4px; background: linear-gradient(#6c7074, #4b4f53); white-space: nowrap; font-size: 12px; }
```
